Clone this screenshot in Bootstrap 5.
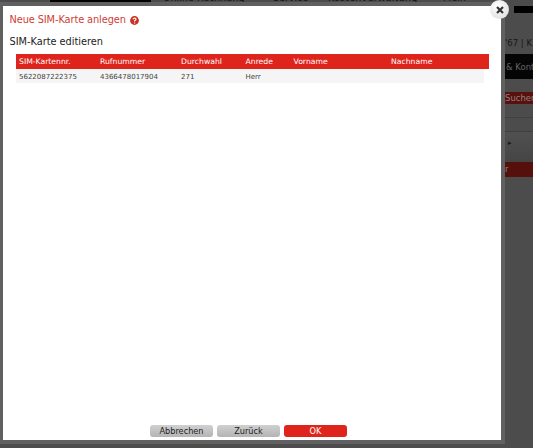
<!DOCTYPE html>
<html lang="de">
<head>
<meta charset="utf-8">
<meta name="viewport" content="width=device-width, initial-scale=1">
<title>SIM-Karte</title>
<link href="https://cdn.jsdelivr.net/npm/bootstrap@5.3.0/dist/css/bootstrap.min.css" rel="stylesheet">
<style>
body{width:533px;height:448px;background:#4c4c4c;font-family:"DejaVu Sans",Verdana,sans-serif;color:#222}
.page-nav{height:6px;padding-left:50px;color:#111;font-size:9.5px;line-height:12px}
.page-nav span{margin-top:-8px;white-space:nowrap;flex:none}
.page-nav .active-tab{width:101px;height:2px;background:#000}
.nav-billing{width:122px;padding-left:12px}
.nav-service{width:55px}
.nav-contract{width:115px;letter-spacing:.25px}
.main-area{height:434px;padding-left:3px}
.dialog-box{width:498px;background:#fff;box-shadow:0 0 0 4px #606060;z-index:1}
.dialog-title{font-size:9.8px;line-height:14px;letter-spacing:-.1px;color:#cf3c34;padding:7px 0 0 6.5px;gap:4.5px}
.dialog-sub{font-size:9.75px;line-height:14px;padding:8px 0 0 6.5px}
.sim-grid{margin:5px 12px 0 13px}
.sim-row{display:grid;grid-template-columns:81px 81px 64.5px 48px 97.5px 1fr;padding-left:3px;white-space:nowrap}
.sim-head{height:15px;line-height:15px;background:#de241b;color:#fff;font-size:7.7px}
.sim-data{height:14px;line-height:16px;background:#f5f5f5;color:#444;font-size:7px;margin-right:5px}
.actions{gap:4px;padding:0 7px 3px 0}
.act{width:63px;height:12px;padding:0;border:0;border-radius:3px;font-size:8.2px;line-height:12px;color:#222;background:linear-gradient(#d0d0d0,#b4b4b4)}
.act-ok{background:#de241b;color:#fff}
.side{width:28px;margin-left:4px;white-space:nowrap;font-size:8.5px;color:#161616}
.side-strip{height:7px;margin-left:9px;background:#000}
.side-phone{height:41px;padding-top:24px;line-height:12px}
.side-menu{height:25px;line-height:26px;background:#050505;color:#666;padding-left:1px}
.side-search{height:12px;line-height:12px;margin-top:13px;background:#5a100c;color:#908080}
.side-line{height:14px;border-bottom:1px solid #404040}
.side-arrow{height:30px;padding:8px 0 0 3px;line-height:6px;font-size:7px;background:linear-gradient(#505050,#454545)}
.side-red{height:15px;background:#55100c;color:#908080;line-height:15px}
.close-dialog{left:490px;top:0;width:19px;height:19px;background:radial-gradient(circle at 40% 35%,#fff,#d8d8d8);padding:0;border:0;z-index:2}
</style>
</head>
<body class="overflow-hidden position-relative">
<nav class="page-nav d-flex overflow-hidden"><div class="active-tab"></div><span class="nav-billing">Online-Rechnung</span><span class="nav-service">Service</span><span class="nav-contract">Kostenverwaltung</span><span>Mein</span></nav>
<div class="main-area d-flex">
<main class="dialog-box d-flex flex-column flex-shrink-0">
<div class="dialog-title d-flex align-items-center"><span>Neue SIM-Karte anlegen</span><svg width="9" height="9" viewBox="0 0 9 9"><circle cx="4.5" cy="4.5" r="4.4" fill="#c9301f"/><path d="M3 3.3Q3.2 2 4.6 2 6 2.1 6 3.2 6 4 4.6 4.8V5.4M4.6 6.4V7.4" fill="none" stroke="#fff" stroke-width="1.2"/></svg></div>
<div class="dialog-sub">SIM-Karte editieren</div>
<div class="sim-grid">
<div class="sim-row sim-head"><span>SIM-Kartennr.</span><span>Rufnummer</span><span>Durchwahl</span><span>Anrede</span><span>Vorname</span><span>Nachname</span></div>
<div class="sim-row sim-data"><span>5622087222375</span><span>4366478017904</span><span>271</span><span>Herr</span></div>
</div>
<div class="actions d-flex justify-content-center mt-auto"><button class="act">Abbrechen</button><button class="act">Zurück</button><button class="act act-ok">OK</button></div>
</main>
<aside class="side overflow-hidden flex-shrink-0">
<div class="side-strip"></div>
<div class="side-phone">'67 | K</div>
<div class="side-menu">&amp; Kont</div>
<div class="side-search">Suchen</div>
<div class="side-line"></div>
<div class="side-line"></div>
<div class="side-arrow">▸</div>
<div class="side-red">r</div>
</aside>
</div>
<button class="close-dialog rounded-circle position-absolute d-flex align-items-center justify-content-center" aria-label="Schließen"><svg width="8" height="8" viewBox="0 0 8 8"><path d="M1 1 7 7M7 1 1 7" stroke="#333" stroke-width="2.2"/></svg></button>
<script src="https://cdn.jsdelivr.net/npm/bootstrap@5.3.0/dist/js/bootstrap.bundle.min.js"></script>
</body>
</html>
